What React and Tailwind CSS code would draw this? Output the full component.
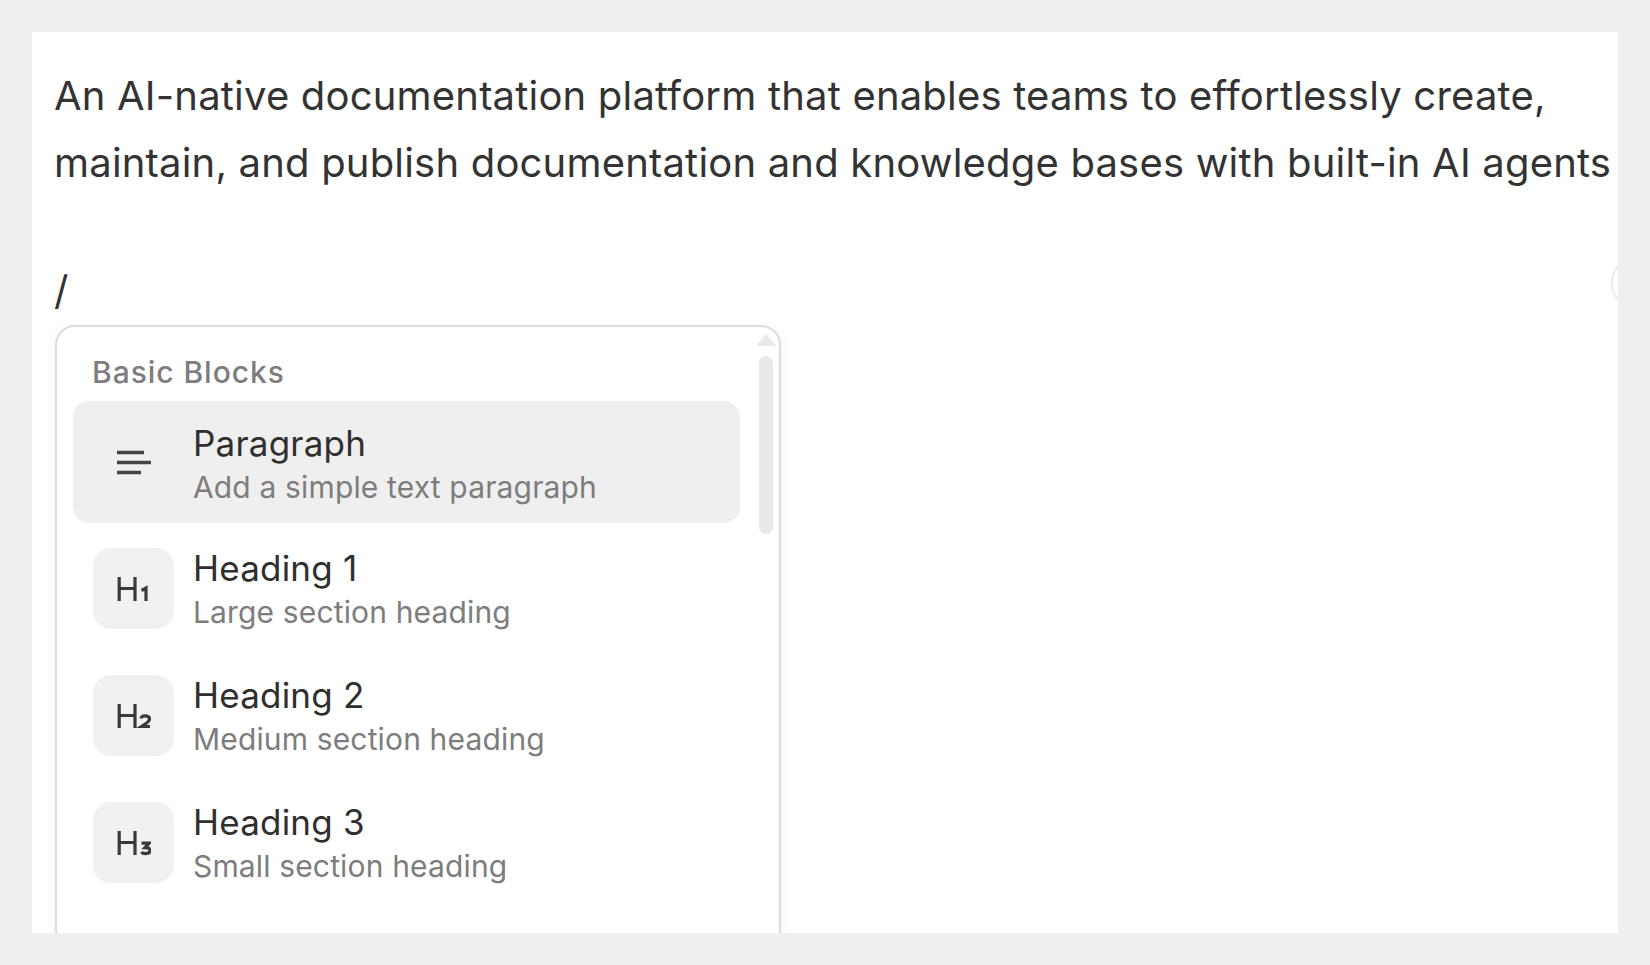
import React from 'react';

const ParagraphIcon = () => (
  <svg width="36" height="28" viewBox="0 0 36 28" fill="none" stroke="#444" strokeWidth="3.4">
    <path d="M1 4.5H28M1 14.5H35M1 24.5H25" />
  </svg>
);

// digit strokes for the heading icons
const digits = {
  1: 'M24.5 15.5L29 13V26',
  2: 'M24 16.5Q24.5 13.8 28 13.8Q32.5 13.8 32.5 17Q32.5 19 29 21.5L24.5 24.5H33',
  3: 'M24.5 14.2H32L28 18.6Q33 18.6 33 21.6Q33 24.6 28.5 24.6Q25.5 24.6 24.3 23',
};

const HeadingIcon = ({ level }) => (
  <svg width="34" height="28" viewBox="0 0 34 28" fill="none" stroke="#3a3a3a" strokeWidth="3.2">
    <path d="M2.2 2V26M18 2V26M2.2 13.5H18" />
    <path d={digits[level]} strokeWidth="3.2" />
  </svg>
);

const items = [
  { title: 'Paragraph', desc: 'Add a simple text paragraph', active: true, gap: 'mt-0' },
  { title: 'Heading 1', desc: 'Large section heading', level: 1, gap: 'mt-[5px]' },
  { title: 'Heading 2', desc: 'Medium section heading', level: 2, gap: 'mt-[5px]' },
  { title: 'Heading 3', desc: 'Small section heading', level: 3, gap: 'mt-[5px]' },
];

const MenuRow = ({ item }) => (
  <div className={`flex h-[122px] w-[667px] items-center gap-[19px] rounded-[16px] px-[20px] ${item.gap} ${item.active ? 'bg-[#efefef]' : ''}`}>
    <div className={`flex h-[81px] w-[81px] shrink-0 items-center justify-center rounded-[18px] ${item.active ? '' : 'bg-[#f1f1f1]'}`}>
      {item.active ? <ParagraphIcon /> : <HeadingIcon level={item.level} />}
    </div>
    <div className={`flex flex-col ${item.active ? 'pt-[6px]' : 'pt-[3px]'}`}>
      <div className="text-[35px] leading-[44px] tracking-[0.2px] text-[#2f2f2f]">{item.title}</div>
      <div className="text-[30px] leading-[44px] tracking-[0.15px] text-[#7d7d7d]">{item.desc}</div>
    </div>
  </div>
);

export default function App() {
  return (
    <div className="h-[965px] w-[1650px] overflow-hidden bg-[#efefef] p-[32px] font-['Inter',sans-serif]">
      <div className="relative h-[901px] w-[1586px] overflow-hidden bg-white pl-[22px] pt-[31px]">
        <p className="whitespace-nowrap text-[40px] leading-[66.5px] tracking-[0.19px] text-[#333333]">
          An AI-native documentation platform that enables teams to effortlessly create,
          <br />
          maintain, and publish documentation and knowledge bases with built-in AI agents
        </p>
        <p className="mt-[62px] text-[40px] leading-[66.5px] text-[#333333]">/</p>

        <div className="relative ml-[1px] h-[700px] w-[726px] rounded-[20px] border-2 border-[#dcdcdc] pl-[16px] shadow-[0_2px_12px_rgba(0,0,0,0.05)]">
          <div className="pl-[19px] pt-[25px] text-[30px] font-medium leading-[40px] tracking-[0.95px] text-[#7d7d7d]">Basic Blocks</div>
          <div className="mt-[9px] flex flex-col">
            {items.map((item) => (
              <MenuRow key={item.title} item={item} />
            ))}
          </div>
          {/* scrollbar */}
          <div className="absolute right-[3px] top-[7px] flex w-[20px] flex-col items-center gap-[10px]">
            <div className="h-0 w-0 border-x-[10px] border-b-[12px] border-x-transparent border-b-[#e8e8e8]" />
            <div className="h-[178px] w-[14px] rounded-full bg-[#e8e8e8]" />
          </div>
        </div>

        {/* round button peeking in at the right edge */}
        <div className="absolute right-[-47px] top-[224px] h-[54px] w-[54px] rounded-full border-2 border-[#ececec] bg-white" />
      </div>
    </div>
  );
}
